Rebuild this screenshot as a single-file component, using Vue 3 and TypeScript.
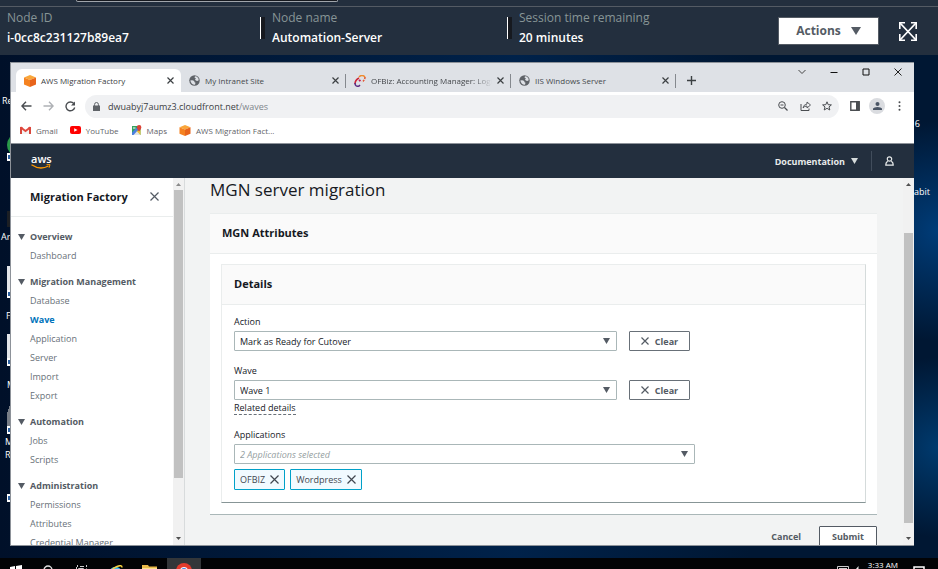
<script setup lang="ts">
import { ref } from 'vue'

interface Tab { title: string; icon: 'cube' | 'globe' | 'feather'; active?: boolean; fade?: boolean }
interface NavGroup { title: string; items: string[] }

const details = [
  { label: 'Node ID', value: 'i-0cc8c231127b89ea7' },
  { label: 'Node name', value: 'Automation-Server' },
  { label: 'Session time remaining', value: '20 minutes' },
]

const tabs: Tab[] = [
  { title: 'AWS Migration Factory', icon: 'cube', active: true },
  { title: 'My Intranet Site', icon: 'globe' },
  { title: 'OFBiz: Accounting Manager: Logi', icon: 'feather', fade: true },
  { title: 'IIS Windows Server', icon: 'globe' },
]

const navGroups: NavGroup[] = [
  { title: 'Overview', items: ['Dashboard'] },
  { title: 'Migration Management', items: ['Database', 'Wave', 'Application', 'Server', 'Import', 'Export'] },
  { title: 'Automation', items: ['Jobs', 'Scripts'] },
  { title: 'Administration', items: ['Permissions', 'Attributes', 'Credential Manager'] },
]

const current = ref('Wave')
const action = ref('Mark as Ready for Cutover')
const wave = ref('Wave 1')
const applications = ref(['OFBIZ', 'Wordpress'])

function removeApplication(name: string) {
  applications.value = applications.value.filter((a) => a !== name)
}
</script>

<template>
  <div class="screen">
    <div class="topline"><div class="topline-box"></div></div>
    <header class="session">
      <dl class="details">
        <div v-for="d in details" :key="d.label" class="detail">
          <dt>{{ d.label }}</dt>
          <dd>{{ d.value }}</dd>
        </div>
      </dl>
      <button class="actions" type="button">
        Actions
        <svg width="10" height="8" viewBox="0 0 10 8"><path d="M0 0h10L5 8z" fill="#545b64" /></svg>
      </button>
      <button class="expand" type="button" aria-label="Full screen">
        <svg width="18" height="19" viewBox="0 0 18 19" fill="none" stroke="#fff">
          <path d="M.8 7V.8H6M12 .8h5.200V7M17.200 12v6.200H12M6 18.200H.8V12" stroke-width="1.600" />
          <path d="M1 1l16 17M17 1L1 18" stroke-width="1.800" />
        </svg>
      </button>
    </header>

    <main class="desktop">
      <div class="shortcuts" aria-hidden="true">
        <span class="lbl l1">Re</span>
        <span class="orb"></span><span class="arrow a1"></span>
        <span class="tower"></span><span class="lbl l2">Ar</span>
        <span class="doc d1"></span><span class="arrow a2"></span><span class="lbl l3">F</span>
        <span class="doc d2"></span><span class="arrow a3"></span><span class="lbl l4">M</span>
        <span class="doc d3"></span><span class="arrow a4"></span>
        <span class="lbl l5">M<br>R</span><span class="arrow a5"></span>
        <span class="lbl l7">6</span><span class="lbl l8">abit</span>
      </div>

      <section class="browser">
        <div class="tabstrip">
          <div class="tabs">
            <div v-for="t in tabs" :key="t.title" class="tab" :class="{ active: t.active }">
              <svg v-if="t.icon === 'cube'" class="fav" width="12" height="12" viewBox="0 0 12 12">
                <path d="M6 0l6 2.500L6 5 0 2.500z" fill="#f9a63a" /><path d="M0 2.500L6 5v7L0 9.500z" fill="#f58220" /><path d="M12 2.500L6 5v7l6-2.500z" fill="#e8641b" />
              </svg>
              <svg v-else-if="t.icon === 'globe'" class="fav" width="11" height="11" viewBox="0 0 22 22">
                <circle cx="11" cy="11" r="10.500" fill="#5f6368" />
                <path d="M2.500 11q4-1 6 0 3 1 2.500 3.500l2 1-1 4q-7 .5-9.500-8.500zM12 2.500q7 .5 7.500 8l-3 1.500-3-1-1.500-2.500 2-1.500-3-2z" fill="#dee1e6" />
              </svg>
              <svg v-else class="fav" width="12" height="12" viewBox="0 0 12 12" fill="none" stroke-width="1.500">
                <path d="M5 3Q1 5 1 9" stroke="#c23" /><path d="M1 8q0 4 4 3l1-1" stroke="#5b2a82" /><path d="M5 2q3-3 6 0" stroke="#f08b2c" /><path d="M11 2q0 3-3 5" stroke="#e4572e" stroke-dasharray="2 1" /><path d="M5 6l1.500-1" stroke="#c2185b" stroke-width="2" />
              </svg>
              <span class="tab-title" :class="{ fade: t.fade }">{{ t.title }}</span>
              <button class="tab-x" type="button" aria-label="Close tab">
                <svg width="7" height="7" viewBox="0 0 7 7"><path d="M.5.5l6 6M6.500.5l-6 6" stroke="#3c4043" stroke-width="1.200" /></svg>
              </button>
            </div>
            <button class="newtab" type="button" aria-label="New tab">
              <svg width="9" height="9" viewBox="0 0 9 9"><path d="M4.500 0v9M0 4.500h9" stroke="#3c4043" stroke-width="1.400" /></svg>
            </button>
          </div>
          <div class="winctl">
            <button type="button" aria-label="Search tabs"><svg width="8" height="8" viewBox="0 0 8 8" fill="none" stroke="#444"><path d="M.5 2L4 5.500 7.500 2" /></svg></button>
            <button type="button" aria-label="Minimize"><svg width="8" height="8" viewBox="0 0 8 8"><path d="M.5 4.500h7" stroke="#111" /></svg></button>
            <button type="button" aria-label="Maximize"><svg width="8" height="8" viewBox="0 0 8 8" fill="none"><path d="M1 1h6v6H1z" stroke="#111" /></svg></button>
            <button type="button" aria-label="Close"><svg width="8" height="8" viewBox="0 0 8 8"><path d="M.5.5l7 7M7.500.5l-7 7" stroke="#222" /></svg></button>
          </div>
        </div>

        <div class="toolbar">
          <button type="button" aria-label="Back"><svg width="11" height="10" viewBox="0 0 11 10" fill="none" stroke="#4a4d51" stroke-width="1.400"><path d="M10.500 5H1M5 .8L.9 5 5 9.200" /></svg></button>
          <button type="button" aria-label="Forward"><svg width="11" height="10" viewBox="0 0 11 10" fill="none" stroke="#aeb1b5" stroke-width="1.400"><path d="M.5 5H10M6 .8L10.100 5 6 9.200" /></svg></button>
          <button type="button" aria-label="Reload"><svg width="11" height="11" viewBox="0 0 11 11" fill="none" stroke="#4a4d51" stroke-width="1.400"><path d="M9.700 6.500A4.400 4.400 0 1 1 8.800 2.500" /><path d="M10 .5v4H6z" fill="#4a4d51" stroke="none" /></svg></button>
          <div class="omnibox">
            <svg width="7" height="9" viewBox="0 0 7 9"><path d="M0 3.500h7V9H0z" fill="#5f6368" /><path d="M1.600 4V2.400a1.900 1.900 0 0 1 3.800 0V4" fill="none" stroke="#5f6368" /></svg>
            <span class="url">dwuabyj7aumz3.cloudfront.net<i>/waves</i></span>
            <button type="button" aria-label="Zoom"><svg width="10" height="10" viewBox="0 0 10 10" fill="none" stroke="#4a4d51"><circle cx="4" cy="4" r="3.300" /><path d="M6.500 6.500L9.500 9.500" stroke-width="1.300" /><path d="M2.500 4h3" /></svg></button>
            <button type="button" aria-label="Share"><svg width="11" height="10" viewBox="0 0 11 10" fill="none" stroke="#4a4d51"><path d="M1 3v6.500h8V7.500" /><path d="M3 7q.5-3.500 4-4V1l3.500 3L7 7V5Q4.500 5 3 7z" stroke-width=".9" /></svg></button>
            <button type="button" aria-label="Bookmark"><svg width="10" height="10" viewBox="0 0 10 10" fill="none" stroke="#4a4d51"><path d="M5 .8l1.200 2.900 3.200.2-2.400 2 .8 3.100L5 7.300 2.200 9 3 5.900.6 3.900l3.200-.2z" /></svg></button>
          </div>
          <button type="button" aria-label="Side panel"><svg width="10" height="10" viewBox="0 0 10 10"><path d="M.8.8h8.400v8.400H.8z" fill="none" stroke="#4a4d51" stroke-width="1.400" /><path d="M6 1h3.500v8H6z" fill="#4a4d51" /></svg></button>
          <button type="button" class="avatar" aria-label="Profile"><svg width="9" height="8" viewBox="0 0 9 8" fill="#4a5565"><circle cx="4.500" cy="2" r="2" /><path d="M0 8V6.500Q1 5 4.500 5T9 6.500V8z" /></svg></button>
          <button type="button" aria-label="Menu"><svg width="3" height="10" viewBox="0 0 3 10" fill="#4a4d51"><circle cx="1.500" cy="1.200" r="1" /><circle cx="1.500" cy="5" r="1" /><circle cx="1.500" cy="8.800" r="1" /></svg></button>
        </div>

        <nav class="bookmarks">
          <a href="#gmail"><svg width="11" height="9" viewBox="0 0 11 9"><path d="M0 1h2.500v7H0zM8.500 1H11v7H8.500z" fill="#d9473c" /><path d="M2 3l3.500 2.500L9 3v5H2z" fill="#f3f3f3" /><path d="M.5 1.200L5.500 5l5-3.800" fill="none" stroke="#e0483d" stroke-width="1.800" /></svg>Gmail</a>
          <a href="#youtube"><svg width="11" height="8" viewBox="0 0 11 8"><rect width="11" height="8" rx="2" fill="#f00" /><path d="M4.200 2.200L7.500 4 4.200 5.800z" fill="#fff" /></svg>YouTube</a>
          <a href="#maps"><svg width="11" height="10" viewBox="0 0 11 10"><path d="M1 1h8.500v9H1z" fill="#34a160" /><path d="M1 9.500L5.500 5l4 5H1z" fill="#e4e4e4" /><path d="M1 7.500L7.500 1h2v1.500L2.500 10H1z" fill="#4a7fe0" /><path d="M5.500 6l4 4V5z" fill="#f0c33c" /><path d="M2 3h2.500" stroke="#fff" /><path d="M5.800 2.300a2.300 2.300 0 0 1 4.600 0Q10.400 4 8.100 6.500 5.800 4 5.800 2.300z" fill="#dc4437" /></svg>Maps</a>
          <a href="#factory"><svg width="12" height="11" viewBox="0 0 12 12"><path d="M6 0l6 2.500L6 5 0 2.500z" fill="#f9a63a" /><path d="M0 2.500L6 5v7L0 9.500z" fill="#f58220" /><path d="M12 2.500L6 5v7l6-2.500z" fill="#e8641b" /></svg>AWS Migration Fact...</a>
        </nav>

        <div class="awsbar">
          <a class="aws" href="#home" aria-label="AWS home">
            <span>aws</span>
            <svg width="20" height="5" viewBox="0 0 20 5" fill="none" stroke="#f90"><path d="M.5.800Q9 6.500 17.500 2" stroke-width="1.300" /><path d="M15.500.7l3.500-.1-.9 3.200" /></svg>
          </a>
          <button class="docs" type="button">Documentation <svg width="7" height="6" viewBox="0 0 7 6"><path d="M0 0h7L3.500 6z" fill="#d5dbdb" /></svg></button>
          <button class="user" type="button" aria-label="Account"><svg width="9" height="10" viewBox="0 0 9 10" fill="none" stroke="#e8ebeb" stroke-width="1.200"><circle cx="4.500" cy="3" r="2.200" /><path d="M2.800 5.200Q.8 6 .8 9.200h7.400Q8.200 6 6.200 5.200" /></svg></button>
        </div>

        <div class="body">
          <aside class="side">
            <div class="side-scroll">
              <div class="side-head">
                <h2>Migration Factory</h2>
                <button type="button" aria-label="Close navigation"><svg width="9" height="9" viewBox="0 0 9 9"><path d="M.5.5l8 8M8.500.5l-8 8" stroke="#545b64" stroke-width="1.200" /></svg></button>
              </div>
              <nav class="nav">
                <section v-for="g in navGroups" :key="g.title">
                  <h3><svg width="7" height="6" viewBox="0 0 7 6"><path d="M0 0h7L3.500 6z" fill="#545b64" /></svg>{{ g.title }}</h3>
                  <a v-for="i in g.items" :key="i" :href="'#' + i" :class="{ on: i === current }" @click.prevent="current = i">{{ i }}</a>
                </section>
              </nav>
            </div>
            <div class="bar side-bar">
              <svg width="5" height="3" viewBox="0 0 5 3"><path d="M0 3h5L2.500 0z" fill="#8a8a8a" /></svg>
              <div class="track"><div class="thumb"></div></div>
              <svg width="5" height="3" viewBox="0 0 5 3"><path d="M0 0h5L2.500 3z" fill="#505050" /></svg>
            </div>
          </aside>

          <div class="page">
            <h1>MGN server migration</h1>
            <section class="card outer">
              <h2 class="card-head">MGN Attributes</h2>
              <div class="outer-body">
                <section class="card inner">
                  <h3 class="card-head">Details</h3>
                  <form class="form" @submit.prevent>
                    <div class="field">
                      <label for="action">Action</label>
                      <div class="row">
                        <div class="select">
                          <select id="action" v-model="action"><option value=""></option><option>Mark as Ready for Cutover</option></select>
                          <svg width="7" height="6" viewBox="0 0 7 6"><path d="M0 0h7L3.500 6z" fill="#545b64" /></svg>
                        </div>
                        <button class="clear" type="button" @click="action = ''"><svg width="8" height="8" viewBox="0 0 8 8"><path d="M.5.5l7 7M7.500.5l-7 7" stroke="#545b64" stroke-width="1.200" /></svg>Clear</button>
                      </div>
                    </div>
                    <div class="field">
                      <label for="wave">Wave</label>
                      <div class="row">
                        <div class="select">
                          <select id="wave" v-model="wave"><option value=""></option><option>Wave 1</option></select>
                          <svg width="7" height="6" viewBox="0 0 7 6"><path d="M0 0h7L3.500 6z" fill="#545b64" /></svg>
                        </div>
                        <button class="clear" type="button" @click="wave = ''"><svg width="8" height="8" viewBox="0 0 8 8"><path d="M.5.5l7 7M7.500.5l-7 7" stroke="#545b64" stroke-width="1.200" /></svg>Clear</button>
                      </div>
                      <a class="related" href="#related">Related details</a>
                    </div>
                    <div class="field">
                      <label for="apps">Applications</label>
                      <div class="select wide">
                        <select id="apps"><option>{{ applications.length }} Applications selected</option></select>
                        <svg width="7" height="6" viewBox="0 0 7 6"><path d="M0 0h7L3.500 6z" fill="#545b64" /></svg>
                      </div>
                      <div class="tokens">
                        <span v-for="a in applications" :key="a" class="token">{{ a }}
                          <button type="button" :aria-label="'Remove ' + a" @click="removeApplication(a)"><svg width="9" height="9" viewBox="0 0 9 9"><path d="M.5.5l8 8M8.500.5l-8 8" stroke="#414750" stroke-width="1.200" /></svg></button>
                        </span>
                      </div>
                    </div>
                  </form>
                </section>
              </div>
            </section>
            <div class="buttons">
              <button class="cancel" type="button">Cancel</button>
              <button class="submit" type="button">Submit</button>
            </div>
          </div>

          <div class="bar page-bar">
            <svg width="5" height="3" viewBox="0 0 5 3"><path d="M0 3h5L2.500 0z" fill="#505050" /></svg>
            <div class="track"><div class="thumb"></div></div>
            <svg width="5" height="3" viewBox="0 0 5 3"><path d="M0 0h5L2.500 3z" fill="#505050" /></svg>
          </div>
        </div>
      </section>
    </main>

    <footer class="taskbar">
      <button type="button" aria-label="Start"><svg width="12" height="12" viewBox="0 0 12 12" fill="#fff"><path d="M0 2l5-1v5H0zM6 1l6-1v6H6zM0 7h5v5H0zM6 7h6v5H6z" /></svg></button>
      <button type="button" aria-label="Search"><svg width="12" height="12" viewBox="0 0 12 12" fill="none" stroke="#ddd"><circle cx="6" cy="5" r="4" stroke-width="1.300" /></svg></button>
      <button type="button" aria-label="Task view"><svg width="12" height="12" viewBox="0 0 12 12" fill="none" stroke="#ccc"><path d="M1.500 0v2M2.500 3.500h5v6h-5zM.5 2v8M4 1.500h4M10.500 0v2M10.500 3.500v6" /></svg></button>
      <button type="button" aria-label="Internet Explorer"><svg width="16" height="14" viewBox="0 0 16 14" fill="none"><circle cx="7.500" cy="8" r="5" stroke="#35b4ee" stroke-width="2.500" /><path d="M3 8h10" stroke="#35b4ee" stroke-width="2" /><path d="M1 9Q3 4 9 1.500q5-2 5 1" stroke="#f7d23e" stroke-width="1.500" /></svg></button>
      <button type="button" aria-label="File Explorer"><svg width="16" height="12" viewBox="0 0 16 12"><path d="M0 0h6l1 1.500h8V12H0z" fill="#e9b949" /><path d="M0 3h15v9H0z" fill="#fbe08b" /></svg></button>
      <button type="button" class="open" aria-label="Chrome"><svg width="16" height="16" viewBox="0 0 16 16"><circle cx="8" cy="8" r="8" fill="#e33b2e" /><path d="M0 8a8 8 0 0 0 7 8l3-6z" fill="#2ba24c" /><path d="M16 8a8 8 0 0 1-8 8l3-7z" fill="#fcc31e" /><circle cx="8" cy="8" r="4" fill="#fff" /><circle cx="8" cy="8" r="3" fill="#4285f4" /></svg></button>
      <div class="tray">
        <svg width="12" height="10" viewBox="0 0 12 10" fill="none" stroke="#ccc"><path d="M.5.5h11v7H.5zM2 2.500h8M2 4.500h8" /></svg>
        <svg width="5" height="10" viewBox="0 0 5 10"><path d="M0 3l2.500-3v8L0 5z" fill="#eee" /></svg>
        <span class="clock">3:33 AM</span>
        <svg class="note" width="12" height="11" viewBox="0 0 12 11" fill="none" stroke="#fff" stroke-width="1.500"><path d="M1 1h10v7H8l-2 2-2-2H1zM3 4h6" /></svg>
      </div>
    </footer>
  </div>
</template>

<style>
body { background: #001733; }
</style>

<style scoped>
.screen, .screen * { box-sizing: border-box; }
.screen { display: flex; flex-direction: column; height: 100vh; overflow: hidden; font-family: "Open Sans", "Noto Sans", sans-serif; font-size: 9px; color: #16191f; }
h1, h2, h3, dl, dt, dd { margin: 0; font-size: inherit; font-weight: inherit; }
button { padding: 0; border: 0; background: none; font: inherit; color: inherit; display: flex; align-items: center; justify-content: center; }
a { color: inherit; text-decoration: none; }
svg { display: block; flex: none; }

.topline { flex: none; height: 7px; background: #232f3e; border-bottom: 1px solid #545b64; padding-left: 76px; }
.topline-box { width: 262px; height: 2px; background: #16191f; border: 1px solid #a0a5ab; border-top: 0; border-radius: 0 0 2px 2px; }
.session { flex: none; height: 48px; padding: 0 21px 0 7px; display: flex; align-items: center; background: #232f3e; font-size: 12px; line-height: 20px; }
.details { flex: 1; display: flex; align-items: center; padding-bottom: 6px; }
.detail { width: 247px; }
.detail:first-child { width: 253px; }
.detail + .detail { display: grid; grid-template-columns: 12px 1fr; }
.detail + .detail::before { content: ""; grid-row: 1 / 3; align-self: center; width: 4px; height: 22px; background: #16191f; border-left: 1px solid #fff; }
.detail dt { color: #879596; grid-column: 2; white-space: nowrap; }
.detail dd { color: #fff; font-weight: 600; grid-column: 2; white-space: nowrap; }
.actions { width: 101px; height: 28px; gap: 10px; background: #fff; border: 1px solid #545b64; color: #545b64; font-weight: 700; }
.expand { margin-left: 20px; }

.desktop { position: relative; flex: 1; min-height: 0; padding: 7px 24px 12px 10px; display: flex; background: radial-gradient(circle at 100% 35%, #003c78 0, transparent 110px), radial-gradient(circle at 100% 78%, #003a6e 0, transparent 90px), linear-gradient(90deg, #001029, #00224a 55%, #001733 80%); }
.shortcuts > * { position: absolute; }
.lbl { color: #fff; font-size: 9px; line-height: 13px; }
.l1 { left: 2px; top: 39px; } .l2 { left: 1px; top: 175px; } .l3 { left: 6px; top: 254px; } .l4 { left: 7px; top: 323px; }
.l5 { left: 5px; top: 380px; } .l7 { right: 18px; top: 62px; } .l8 { right: 8px; top: 130px; }
.orb { left: 7px; top: 79px; width: 20px; height: 22px; border-radius: 50%; background: #2a9a4a; }
.tower { left: 7px; top: 156px; width: 10px; height: 16px; background: #1c1f24; }
.doc { left: 7px; width: 10px; height: 26px; background: #e4e6ea; }
.d1 { top: 211px; } .d2 { top: 279px; } .d3 { top: 350px; background: linear-gradient(110deg, transparent 15%, #777d86 15%); }
.arrow { left: 7px; width: 10px; height: 8px; border: 2px solid #fff; border-left-width: 1px; background: #2b5f9e; }
.a1 { top: 98px; } .a2 { top: 235px; } .a3 { top: 303px; } .a4 { top: 371px; } .a5 { top: 439px; }

.browser { position: relative; flex: 1; min-width: 0; display: flex; flex-direction: column; overflow: hidden; background: #fff; border: 1px solid #8d9299; border-right: 0; }
.tabstrip { flex: none; height: 29px; display: flex; justify-content: space-between; background: #dee1e6; padding-left: 5px; color: #45484c; font-size: 8px; }
.tabs { display: flex; align-items: flex-end; min-width: 0; }
.tab { width: 165px; height: 23px; padding: 0 7px 0 8px; display: flex; align-items: center; gap: 5px; }
.tab.active { background: #fff; border-radius: 6px 6px 0 0; color: #3c4043; }
.tab:not(.active) { background: linear-gradient(#85898e, #85898e) right center / 1px 14px no-repeat; }
.tab-title { flex: 1; min-width: 0; white-space: nowrap; }
.fade { mask-image: linear-gradient(90deg, #000 85%, transparent); }
.newtab { width: 30px; height: 23px; }
.winctl { display: flex; height: 18px; }
.winctl button { width: 32px; }

.toolbar { flex: none; height: 28px; padding: 0 4px; display: flex; align-items: center; }
.toolbar > button { width: 22px; }
.omnibox { flex: 1; height: 23px; margin: 0 5px 0 4px; padding: 0 1px 0 8px; border-radius: 12px; display: flex; align-items: center; gap: 8px; background: #f0f1f3; color: #3c4043; }
.omnibox button { width: 22px; margin-left: -8px; }
.url { flex: 1; }
.url i { font-style: normal; color: #80868b; }
.toolbar > .avatar { width: 16px; height: 16px; margin: 0 3px; border-radius: 50%; background: #dadce0; }
.bookmarks { flex: none; height: 24px; padding: 0 9px 3px; display: flex; align-items: center; gap: 12px; color: #5f6368; border-bottom: 1px solid #8d9299; font-size: 8px; }
.bookmarks a { display: flex; align-items: center; gap: 5px; }

.awsbar { flex: none; height: 34px; padding: 0 20px; display: flex; align-items: center; background: #232f3e; color: #e8ebeb; }
.aws { margin-right: auto; font-size: 11px; font-weight: 600; line-height: 10px; color: #fff; }
.docs { font-weight: 700; gap: 6px; padding-right: 13px; height: 20px; border-right: 1px solid #414d5c; }
.user { width: 22px; justify-content: flex-end; }

.body { flex: 1; min-height: 0; display: flex; background: #f2f3f3; }
.side { flex: none; width: 174px; display: flex; background: #fff; border-right: 1px solid #d8dbdc; }
.side-scroll { flex: 1; min-width: 0; overflow: hidden; }
.side-head { height: 39px; padding: 0 14px 1px 19px; display: flex; align-items: center; justify-content: space-between; border-bottom: 1px solid #eaeded; }
.side-head h2 { font-size: 11px; font-weight: 700; }
.nav { padding: 10px 0 0 7px; color: #545b64; line-height: 19px; white-space: nowrap; }
.nav section { display: flex; flex-direction: column; margin-bottom: 7px; }
.nav h3 { display: flex; align-items: center; gap: 5px; font-weight: 700; }
.nav a { margin-left: 12px; color: #687078; }
.nav a.on { color: #0073bb; font-weight: 700; }
.bar { flex: none; width: 11px; padding: 5px 0 5px; display: flex; flex-direction: column; align-items: center; gap: 4px; background: #f1f1f1; }
.track { flex: 1; width: 9px; display: flex; flex-direction: column; }
.thumb { background: #c1c1c1; }
.side-bar .thumb { flex: 0 0 84%; }
.page-bar .thumb { flex: 0 0 87%; margin-top: auto; }
.page-bar .track { padding-bottom: 10px; }

.page { flex: 1; min-width: 0; overflow: hidden; padding: 0 26px 0 25px; }
h1 { font-size: 17px; line-height: 24px; margin-bottom: 11px; }
.card { background: #fff; border: 1px solid #eaeded; }
.card-head { height: 40px; padding: 0 12px 2px; display: flex; align-items: center; font-size: 11px; font-weight: 700; background: #fafafa; border-bottom: 1px solid #eaeded; }
.outer { border-width: 1px 0; border-bottom-color: #aab7b8; }
.outer-body { padding: 10px 11px 11px; }
.inner { border-right-color: #d5dbdb; border-bottom-color: #879596; }
.form { padding: 11px 12px 12px; display: flex; flex-direction: column; gap: 14px; }
.field { display: flex; flex-direction: column; align-items: flex-start; }
.field label { line-height: 12px; margin-bottom: 3px; }
.row { display: flex; gap: 12px; align-self: stretch; }
.select { width: 62%; max-width: 383px; display: grid; align-items: center; }
.select.wide { width: 75%; max-width: 461px; }
.select > * { grid-area: 1 / 1; }
.select svg { justify-self: end; margin-right: 7px; pointer-events: none; }
select { appearance: none; width: 100%; height: 20px; padding: 0 5px; border: 1px solid #aab7b8; border-radius: 1px; background: #fff; font: inherit; color: #16191f; }
.wide select { font-style: italic; color: #95a0a1; }
.clear { width: 61px; height: 20px; gap: 6px; border: 1px solid #687078; border-radius: 1px; color: #545b64; font-weight: 700; }
.related { line-height: 12px; margin-top: 2px; border-bottom: 1px dashed #687078; }
.tokens { display: flex; gap: 5px; margin-top: 5px; }
.token { height: 21px; padding: 0 5px; display: flex; align-items: center; gap: 5px; border: 1px solid #00a1c9; border-radius: 1px; background: #f1faff; color: #414750; }
.buttons { display: flex; justify-content: flex-end; gap: 18px; padding: 11px 0; font-weight: 700; color: #545b64; }
.submit { width: 58px; height: 20px; background: #fff; border: 1px solid #545b64; border-radius: 1px; }

.taskbar { flex: none; height: 11px; overflow: hidden; display: flex; align-items: flex-start; background: #020305; color: #fff; }
.taskbar button { width: 34px; height: 30px; padding-top: 7px; align-items: flex-start; }
.taskbar button:first-child { width: 31px; }
.taskbar .open { background: #333639; padding-top: 5px; }
.tray { margin-left: auto; padding-right: 13px; display: flex; align-items: flex-start; gap: 7px; }
.tray svg { margin-top: 8px; }
.clock { line-height: 14px; font-size: 8px; }
.tray .note { margin-left: 8px; }
</style>
